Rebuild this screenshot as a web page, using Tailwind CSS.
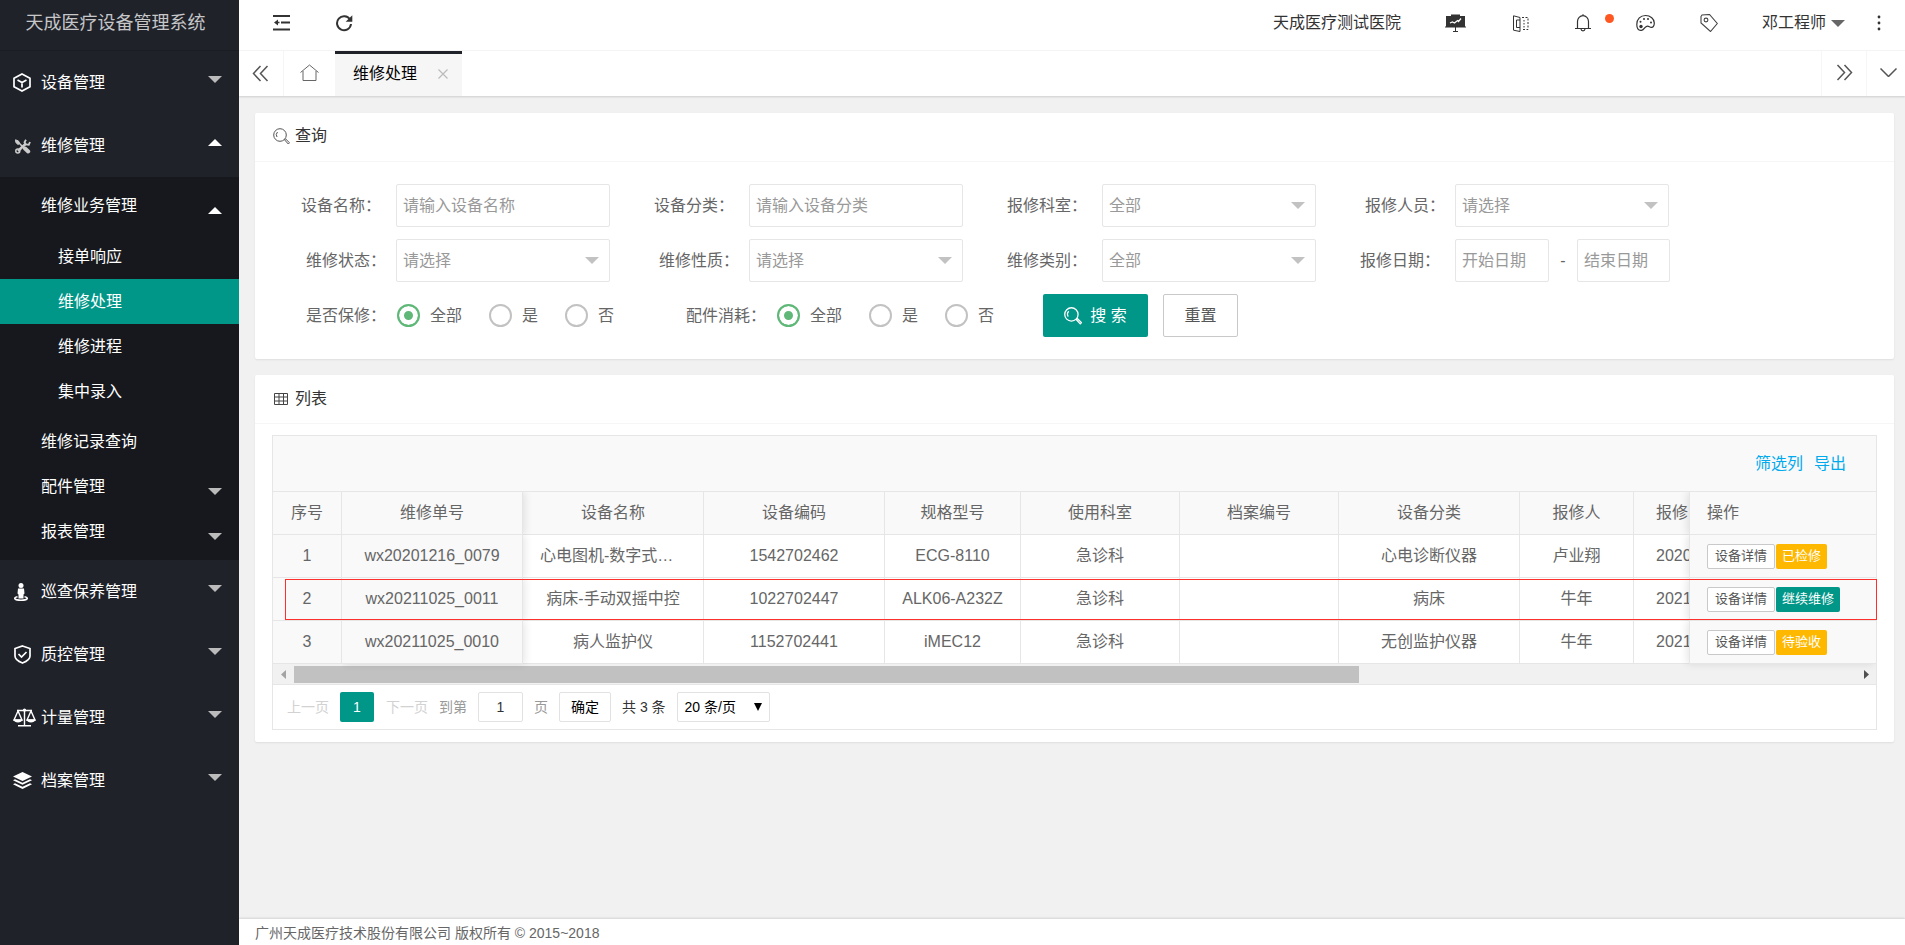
<!DOCTYPE html>
<html lang="zh-CN">
    <head>
        <meta charset="UTF-8">
        <title>天成医疗设备管理系统</title>
        <script src="https://cdn.jsdelivr.net/npm/@tailwindcss/browser@4"></script>
    </head>
    <body class="flex h-screen overflow-hidden bg-[#f1f1f1] font-['Liberation_Sans','Noto_Sans_CJK_SC',sans-serif] text-base text-[#666]">

        <!-- menu lateral -->
        <aside class="w-[239px] shrink-0 bg-[#20222a] text-white">
            <div class="h-[51px] pb-1 pr-2 flex items-center justify-center text-lg text-white/75 border-b border-[#1b1d23]">天成医疗设备管理系统</div>
            <nav id="menu"></nav>
        </aside>

        <div class="flex-1 min-w-0 flex flex-col">

            <!-- topo -->
            <header class="h-[51px] shrink-0 bg-white border-b border-[#f6f6f6] flex items-center justify-between pb-1 pl-[34px] pr-6 text-[#333]">
                <div class="flex items-center gap-11">
                    <button aria-label="收起菜单">
                        <svg class="w-[18px] h-4" viewBox="0 0 18 16" fill="none" stroke="#333" stroke-width="2"><path d="M0 1h17M8 7.500h9M0 14.500h17"/><path d="M1 7.500l4-3v2.200h1.500v1.600H5v2.200z" fill="#333" stroke="none"/></svg>
                    </button>
                    <button aria-label="刷新">
                        <svg class="w-[18px] h-[18px]" viewBox="0 0 18 18" fill="none" stroke="#333" stroke-width="2"><path d="M15 5.500A7 7 0 1 0 16 10"/><path d="M17.300 1.200v6.600h-6.600z" fill="#333" stroke="none"/></svg>
                    </button>
                </div>
                <div class="flex items-center">
                    <a href="#">天成医疗测试医院</a>
                    <button aria-label="大屏" class="ml-11">
                        <svg class="w-[21px] h-[18px]" viewBox="0 0 21 18" fill="none" stroke="#333"><path d="M1 2h5V.500h9V2h5v11H1z" fill="#333" stroke="none"/><path d="M5 9l2.500-1 2 1 3-2.500 1 1 2.500-3" stroke="#fff" stroke-width="1.200"/><path d="M0 13h21M10.500 13v4.500M8 17.500h5"/></svg>
                    </button>
                    <button aria-label="切换" class="ml-[46px]">
                        <svg class="w-[17px] h-[17px]" viewBox="0 0 17 17" fill="none" stroke="#333"><path d="M8 2.500L1.500.800v14.400L8 16.500zM8 5H4.500v7.500H8"/><path d="M10 2.500h6v12h-6" stroke-dasharray="2 1.500"/><path d="M12 5v8" stroke-dasharray="1.500 1.500"/></svg>
                    </button>
                    <button aria-label="消息" class="ml-[45px] relative">
                        <svg class="w-[18px] h-[18px]" viewBox="0 0 18 18" fill="none" stroke="#333" stroke-width="1.200"><path d="M1 14.500h16M3.500 14.500V7.500a5.500 5.800 0 0 1 11 0v7M9 2V.300M7 15c.3 2.600 3.700 2.600 4 0"/></svg>
                        <span class="absolute -right-[22px] top-0 w-[9px] h-[9px] rounded-full bg-[#ff5722]"></span>
                    </button>
                    <button aria-label="主题" class="ml-11">
                        <svg class="w-[19px] h-[18px]" viewBox="0 0 19 18" fill="none" stroke="#333" stroke-width="1.200"><path d="M5.500 16.300C2 16.800.800 14 .800 10.500.800 5 4.500 1.500 9.500 1.500c5 0 8.800 3.500 8.800 7.500 0 2.800-1.300 4.600-3 4.400-2-.3-2.500-1.600-4.500-1.100-2.500.6-2.300 3.600-5.300 4z"/><g fill="#333" stroke="none"><circle cx="5" cy="12.500" r="1.700"/><circle cx="4.500" cy="7.800" r="1"/><circle cx="8" cy="5" r="1"/><circle cx="12" cy="5" r="1"/><circle cx="15" cy="8.500" r="1"/></g></svg>
                    </button>
                    <button aria-label="便签" class="ml-[45px]">
                        <svg class="w-[18px] h-[18px]" viewBox="0 0 18 18" fill="none" stroke="#444" stroke-width="1.100"><path d="M1 2.500L2 1l7.500-.5L17.300 9.500 10.500 17.500 1 9z"/><circle cx="6" cy="6" r="1.900"/></svg>
                    </button>
                    <button class="ml-11 flex items-center gap-[5px]">邓工程师
                        <svg class="w-3.5 h-[7px]" viewBox="0 0 14 7" fill="#666"><path d="M0 0h14L7 7z"/></svg>
                    </button>
                    <button aria-label="更多" class="ml-8">
                        <svg class="w-1 h-4" viewBox="0 0 4 16" fill="#333"><circle cx="2" cy="2" r="1.400"/><circle cx="2" cy="8" r="1.400"/><circle cx="2" cy="14" r="1.400"/></svg>
                    </button>
                </div>
            </header>

            <!-- abas -->
            <div class="h-[45px] shrink-0 bg-white shadow-[0_1px_2px_rgba(0,0,0,0.15)] flex">
                <button aria-label="左移" class="w-[45px] border-r border-[#f6f6f6] flex items-center justify-center pr-0.5">
                    <svg class="w-[17px] h-[17px]" viewBox="0 0 17 17" fill="none" stroke="#555" stroke-width="1.500"><path d="M8.500 1L1.500 8.500l7 7.500M15.500 1l-7 7.500 7 7.500"/></svg>
                </button>
                <button aria-label="首页" class="w-[51px] flex items-center justify-center pb-0.5">
                    <svg class="w-[19px] h-[18px]" viewBox="0 0 19 18" fill="none" stroke="#666"><path d="M.500 8.500l9-7.500 9 7.500M3 7v9.500h13V7"/></svg>
                </button>
                <div class="w-[127px] bg-[#f6f6f6] border-t-3 border-[#20222a] flex items-center justify-between pl-[18px] pr-3.5 pb-[3px] text-black">
                    <a href="#">维修处理</a>
                    <button aria-label="关闭"><svg class="w-2.5 h-2.5" viewBox="0 0 10 10" stroke="#bbb" stroke-width="1.200"><path d="M.500.500l9 9M9.500.500l-9 9"/></svg></button>
                </div>
                <div class="flex-1"></div>
                <button aria-label="右移" class="w-[45px] border-l border-[#f6f6f6] flex items-center justify-center pb-0.5">
                    <svg class="w-[17px] h-[17px]" viewBox="0 0 17 17" fill="none" stroke="#555" stroke-width="1.500"><path d="M1.500 1l7 7.500-7 7.500M8.500 1l7 7.500-7 7.500"/></svg>
                </button>
                <button aria-label="展开" class="w-[39px] border-l border-[#f6f6f6] flex items-center pl-[13px] pb-0.5">
                    <svg class="w-[17px] h-[9px]" viewBox="0 0 17 9" fill="none" stroke="#555" stroke-width="1.500"><path d="M.500.500l8 8 8-8"/></svg>
                </button>
            </div>

            <main class="flex-1 min-h-0 pt-[17px] pl-4 pr-[11px] flex flex-col gap-4">

                <!-- filtro -->
                <section class="bg-white rounded-xs shadow-[0_1px_2px_rgba(0,0,0,0.08)]">
                    <h2 class="h-[49px] border-b border-[#f6f6f6] pl-[18px] pb-0.5 flex items-center gap-[5px] text-[#333]">
                        <svg class="w-[17px] h-[17px]" viewBox="0 0 17 17" fill="none" stroke="#555"><circle cx="7" cy="7" r="6.300"/><path d="M4 9A4 4 0 0 1 4.500 4M11.500 11.800l1-1 4 4-1.200 1.200z"/></svg>
                        查询
                    </h2>
                    <form class="px-[17px] pt-[22px] pb-[22px] flex flex-col gap-3">
                        <div class="flex flex-wrap gap-x-[15px] gap-y-3">
                            <div class="flex items-center">
                                <label for="nome" class="w-[124px] pr-[15px] text-right">设备名称：</label>
                                <input id="nome" type="text" placeholder="请输入设备名称" class="w-[214px] h-[43px] border border-[#e6e6e6] rounded-xs px-1.5 placeholder:text-[#999]">
                            </div>
                            <div class="flex items-center">
                                <label for="classe" class="w-[124px] pr-[15px] text-right">设备分类：</label>
                                <input id="classe" type="text" placeholder="请输入设备分类" class="w-[214px] h-[43px] border border-[#e6e6e6] rounded-xs px-1.5 placeholder:text-[#999]">
                            </div>
                            <div class="flex items-center relative">
                                <label for="setor" class="w-[124px] pr-[15px] text-right">报修科室：</label>
                                <select id="setor" class="appearance-none w-[214px] h-[43px] border border-[#e6e6e6] rounded-xs px-1.5 text-[#999]"><option>全部</option></select>
                                <svg class="absolute right-[11px] w-3.5 h-[7px] pointer-events-none" viewBox="0 0 14 7" fill="#c2c2c2"><path d="M0 0h14L7 7z"/></svg>
                            </div>
                            <div class="flex items-center relative">
                                <label for="pessoa" class="w-[124px] pr-2.5 text-right">报修人员：</label>
                                <select id="pessoa" class="appearance-none w-[214px] h-[43px] border border-[#e6e6e6] rounded-xs px-1.5 text-[#999]"><option>请选择</option></select>
                                <svg class="absolute right-[11px] w-3.5 h-[7px] pointer-events-none" viewBox="0 0 14 7" fill="#c2c2c2"><path d="M0 0h14L7 7z"/></svg>
                            </div>
                        </div>
                        <div class="flex flex-wrap gap-x-[15px] gap-y-3">
                            <div class="flex items-center relative">
                                <label for="estado" class="w-[124px] pr-2.5 text-right">维修状态：</label>
                                <select id="estado" class="appearance-none w-[214px] h-[43px] border border-[#e6e6e6] rounded-xs px-1.5 text-[#999]"><option>请选择</option></select>
                                <svg class="absolute right-[11px] w-3.5 h-[7px] pointer-events-none" viewBox="0 0 14 7" fill="#c2c2c2"><path d="M0 0h14L7 7z"/></svg>
                            </div>
                            <div class="flex items-center relative">
                                <label for="natureza" class="w-[124px] pr-2.5 text-right">维修性质：</label>
                                <select id="natureza" class="appearance-none w-[214px] h-[43px] border border-[#e6e6e6] rounded-xs px-1.5 text-[#999]"><option>请选择</option></select>
                                <svg class="absolute right-[11px] w-3.5 h-[7px] pointer-events-none" viewBox="0 0 14 7" fill="#c2c2c2"><path d="M0 0h14L7 7z"/></svg>
                            </div>
                            <div class="flex items-center relative">
                                <label for="tipo" class="w-[124px] pr-[15px] text-right">维修类别：</label>
                                <select id="tipo" class="appearance-none w-[214px] h-[43px] border border-[#e6e6e6] rounded-xs px-1.5 text-[#999]"><option>全部</option></select>
                                <svg class="absolute right-[11px] w-3.5 h-[7px] pointer-events-none" viewBox="0 0 14 7" fill="#c2c2c2"><path d="M0 0h14L7 7z"/></svg>
                            </div>
                            <div class="flex items-center">
                                <label for="inicio" class="w-[124px] pr-[15px] text-right">报修日期：</label>
                                <input id="inicio" type="text" placeholder="开始日期" class="w-[94px] h-[43px] border border-[#e6e6e6] rounded-xs px-1.5 placeholder:text-[#999]">
                                <span class="w-7 text-center">-</span>
                                <input aria-label="结束日期" type="text" placeholder="结束日期" class="w-[93px] h-[43px] border border-[#e6e6e6] rounded-xs px-1.5 placeholder:text-[#999]">
                            </div>
                        </div>
                        <div class="flex flex-wrap items-center">
                            <fieldset class="flex items-center">
                                <legend class="float-left w-[125px] pr-[11px] text-right">是否保修：</legend>
                                <div class="garantia flex gap-[27px]"></div>
                            </fieldset>
                            <fieldset class="flex items-center ml-[18px]">
                                <legend class="float-left w-[145px] pr-[11px] text-right">配件消耗：</legend>
                                <div class="pecas flex gap-[27px]"></div>
                            </fieldset>
                            <button type="button" class="ml-[49px] w-[105px] h-[43px] rounded-xs bg-[#009688] text-white flex items-center justify-center gap-2">
                                <svg class="w-[18px] h-[18px]" viewBox="0 0 17 17" fill="none" stroke="#fff" stroke-width="1.200"><circle cx="7" cy="7" r="6.300"/><path d="M4 9A4 4 0 0 1 4.500 4M11.500 11.800l1-1 4 4-1.200 1.200z"/></svg>
                                搜 索
                            </button>
                            <button type="reset" class="ml-[15px] w-[75px] h-[43px] rounded-xs border border-[#c9c9c9] text-[#555]">重置</button>
                        </div>
                    </form>
                </section>

                <!-- lista -->
                <section class="bg-white rounded-xs shadow-[0_1px_2px_rgba(0,0,0,0.08)]">
                    <h2 class="h-[49px] border-b border-[#f6f6f6] pl-[19px] flex items-center gap-[7px] text-[#333]">
                        <svg class="w-3.5 h-3" viewBox="0 0 14 12" fill="none" stroke="#444"><path d="M.500.500h13v11H.500zM.500 4h13M.500 8h13M5 .500v11M9.500.500v11"/></svg>
                        列表
                    </h2>
                    <div class="mx-[17px] mt-[11px] border border-[#e6e6e6]">
                        <div class="h-14 bg-[#f9f9f9] border-b border-[#e6e6e6] flex items-center justify-end gap-[11px] pr-[30px] text-[#01aaed]">
                            <a href="#">筛选列</a>
                            <a href="#">导出</a>
                        </div>

                        <div class="relative">
                            <table class="w-full table-fixed border-separate border-spacing-0 text-center">
                                <colgroup>
                                    <col class="w-[69px]"><col class="w-[181px]"><col class="w-[181px]"><col class="w-[181px]"><col class="w-[136px]">
                                    <col class="w-[159px]"><col class="w-[159px]"><col class="w-[181px]"><col class="w-[114px]"><col><col class="w-[187px]">
                                </colgroup>
                                <thead id="cabecalho"></thead>
                                <tbody id="linhas"></tbody>
                            </table>
                            <div class="absolute left-3 -right-px top-[87px] h-[41px] border border-[#ff302c] pointer-events-none z-10"></div>
                        </div>

                        <div class="h-[21px] bg-[#f1f1f1] border-b border-[#e6e6e6] flex items-center px-[7px]">
                            <svg class="w-[6px] h-[9px] shrink-0" viewBox="0 0 6 9" fill="#a3a3a3"><path d="M6 0v9L1 4.500z"/></svg>
                            <div class="flex-1 mx-2"><div class="w-[68.2%] h-[17px] bg-[#c1c1c1]"></div></div>
                            <svg class="w-[6px] h-[9px] shrink-0" viewBox="0 0 6 9" fill="#505050"><path d="M1 0v9l5-4.500z"/></svg>
                        </div>

                        <div class="h-11 flex items-center pl-[14px] pb-px text-sm text-[#999]">
                            <button class="text-[#d2d2d2]" disabled>上一页</button>
                            <button class="ml-[11px] w-[34px] h-[30px] rounded-xs bg-[#009688] text-white">1</button>
                            <button class="ml-3 text-[#d2d2d2]" disabled>下一页</button>
                            <label for="pagina" class="ml-[11px]">到第</label>
                            <input id="pagina" type="text" value="1" class="ml-[11px] w-[45px] h-[30px] border border-[#e2e2e2] rounded-xs text-center text-[#333]">
                            <span class="ml-[11px]">页</span>
                            <button class="ml-[11px] w-[52px] h-[30px] border border-[#e2e2e2] rounded-xs text-black">确定</button>
                            <span class="ml-[11px] text-[#333]">共 3 条</span>
                            <div class="relative ml-[11px] flex items-center">
                                <select aria-label="每页条数" class="appearance-none w-[93px] h-[30px] border border-[#e2e2e2] rounded-xs pl-[7px] text-black"><option>20 条/页</option></select>
                                <svg class="absolute right-2 w-2 h-2 pointer-events-none" viewBox="0 0 8 8" fill="#000"><path d="M0 0h8L4 8z"/></svg>
                            </div>
                        </div>
                    </div>
                    <div class="h-3"></div>
                </section>
            </main>

            <footer class="h-[26px] shrink-0 bg-white shadow-[0_-1px_2px_rgba(0,0,0,0.12)] flex items-center pl-4 pt-0.5 text-sm">广州天成医疗技术股份有限公司 版权所有 © 2015~2018</footer>
        </div>

        <script>

            var icones = {
                cubo: `<svg class="w-[18px] h-[19px]" viewBox="0 0 18 19" fill="none" stroke="#fff" stroke-width="1.700"><path d="M9 1l8 4.300v8.400L9 18l-8-4.300V5.300zM4.500 7L9 9.500 13.500 7M9 9.500v5"/></svg>`,
                chave: `<svg class="w-[18px] h-[15px] mt-0.5" viewBox="0 0 18 15" fill="none" stroke="#ccc"><path d="M5 3l8 8" stroke-width="1.600"/><path d="M2.500.800L5.500 2l1 2.500-1.500 1L2.800 3.500z" fill="#ccc"/><path d="M12 9.500l3.200 3" stroke-width="4" stroke-linecap="round"/><path d="M13 4.500l-8 7.500" stroke-width="2.600"/><path d="M13 .800l-1.500 2.400 1.500 2.300 2.800.2L17 3" stroke-width="1.800"/><circle cx="4.800" cy="12" r="2" stroke-width="1.500"/></svg>`,
                pessoa: `<svg class="w-4 h-[18px]" viewBox="0 0 16 18" fill="#fff"><circle cx="8" cy="2.500" r="2.500"/><path d="M5 5.500h6l.500 5-1 1v4h-5v-4l-1-1z"/><path d="M4.500 13.800c-5 1-3 3.400 3.500 3.400s8.500-2.400 3.500-3.400" fill="none" stroke="#fff" stroke-width="1.500"/></svg>`,
                escudo: `<svg class="w-[19px] h-[19px]" viewBox="0 0 19 19" fill="none" stroke="#fff" stroke-width="1.700"><path d="M9.500 1l7.500 2.500V11c0 3.500-3.500 5.500-7.500 7-4-1.500-7.500-3.500-7.500-7V3.500zM5.500 9l3 3 5-5"/></svg>`,
                balanca: `<svg class="w-[23px] h-[19px]" viewBox="0 0 23 19" fill="none" stroke="#fff" stroke-width="1.400"><path d="M4 2.500h15M11.500 1v16M5 17.800h13M5 3L1 12h8zM18 3l-4 9h8z"/><path d="M.500 11.500h9c-.5 4-8.500 4-9 0zM13.500 11.500h9c-.5 4-8.500 4-9 0z" fill="#fff" stroke="none"/><circle cx="11.500" cy="2" r="1.600" fill="#fff" stroke="none"/></svg>`,
                camadas: `<svg class="w-[19px] h-[17px]" viewBox="0 0 19 17" fill="#fff"><path d="M9.500 0L19 4.500 9.500 9 0 4.500zM2 7.200l7.500 3.600L17 7.200l2 1-9.500 4.500L0 8.200zM2 11.200l7.500 3.600 7.500-3.600 2 1L9.500 17 0 12.200z"/></svg>`
            }

            var baixo = `<svg class="w-3.5 h-[7px]" viewBox="0 0 14 7" fill="#bbb"><path d="M0 0h14L7 7z"/></svg>`
            var cima = `<svg class="w-3.5 h-[7px]" viewBox="0 0 14 7" fill="#fff"><path d="M0 7h14L7 0z"/></svg>`

            var menu = [
                { titulo: "设备管理", icone: "cubo" },
                { titulo: "维修管理", icone: "chave", aberto: true, filhos: [
                    { titulo: "维修业务管理", seta: cima, filhos: ["接单响应", "维修处理", "维修进程", "集中录入"] },
                    { titulo: "维修记录查询", seta: "" },
                    { titulo: "配件管理", seta: baixo },
                    { titulo: "报表管理", seta: baixo }
                ]},
                { titulo: "巡查保养管理", icone: "pessoa" },
                { titulo: "质控管理", icone: "escudo" },
                { titulo: "计量管理", icone: "balanca" },
                { titulo: "档案管理", icone: "camadas" }
            ]

            function montarFilhos(filhos){
                var lista = ""
                filhos.map( item => {
                    lista += `<a href="#" class="h-[45px] pl-[41px] pr-[17px] flex items-center justify-between">${item.titulo}<span class="pt-2.5">${item.seta}</span></a>`
                    if(item.filhos){
                        lista += `<div class="pt-1.5 pb-[5px]">`
                        item.filhos.map( neto => {
                            var cor = neto == "维修处理" ? "bg-[#009688]" : ""
                            lista += `<a href="#" class="h-[45px] pl-[58px] flex items-center ${cor}">${neto}</a>`
                        })
                        lista += `</div>`
                    }
                })
                return `<div class="bg-[#16181d] py-1.5">${lista}</div>`
            }

            function montarMenu(){
                var lista = ""
                menu.map( item => {
                    lista += `
                    <a href="#" class="h-[63px] pl-[13px] pr-[17px] flex items-center">
                        <span class="w-7">${icones[item.icone]}</span>
                        <span class="flex-1">${item.titulo}</span>
                        <span class="pb-1.5">${item.aberto ? cima : baixo}</span>
                    </a>`
                    if(item.filhos){
                        lista += montarFilhos(item.filhos)
                    }
                })
                document.getElementById("menu").innerHTML = lista
            }

            function montarRadios(nome){
                var lista = ""
                var opcoes = ["全部", "是", "否"]
                opcoes.map( (item, i) => {
                    lista += `
                    <label class="flex items-center gap-2.5">
                        <input type="radio" name="${nome}" ${i == 0 ? "checked" : ""} class="appearance-none w-[23px] h-[23px] rounded-full border-2 border-[#c2c2c2] checked:border-[#5fb878] checked:bg-[#5fb878] checked:shadow-[inset_0_0_0_5px_white]">${item}
                    </label>`
                })
                document.querySelector("." + nome).innerHTML = lista
            }

            var colunas = ["序号", "维修单号", "设备名称", "设备编码", "规格型号", "使用科室", "档案编号", "设备分类", "报修人", "报修日期"]

            var registros = [
                ["1", "wx20201216_0079", "心电图机-数字式十二导", "1542702462", "ECG-8110", "急诊科", "", "心电诊断仪器", "卢业翔", "2020-12-16"],
                ["2", "wx20211025_0011", "病床-手动双摇中控", "1022702447", "ALK06-A232Z", "急诊科", "", "病床", "牛年", "2021-10-25"],
                ["3", "wx20211025_0010", "病人监护仪", "1152702441", "iMEC12", "急诊科", "", "无创监护仪器", "牛年", "2021-10-25"]
            ]

            var acoes = [
                { texto: "已检修", cor: "bg-[#ffb800]" },
                { texto: "继续维修", cor: "bg-[#009688]" },
                { texto: "待验收", cor: "bg-[#ffb800]" }
            ]

            // a sombra das colunas fixas só aparece para o lado de dentro (e embaixo na última linha)
            function sombra(lado, ultima){
                if(lado == "esquerda"){
                    return "relative shadow-[2px_0_8px_rgba(0,0,0,0.1)] " + (ultima ? "[clip-path:inset(0_-12px_-8px_0)]" : "[clip-path:inset(0_-12px_0_0)]")
                }
                return "relative shadow-[-2px_0_8px_rgba(0,0,0,0.1)] " + (ultima ? "[clip-path:inset(0_0_-8px_-12px)]" : "[clip-path:inset(0_0_0_-12px)]")
            }

            function classeCelula(i, ultima){
                if(i == 0) return "bg-[#f9f9f9] border-r"
                if(i == 1) return "bg-[#f9f9f9] border-r " + sombra("esquerda", ultima)
                if(i == 2) return "border-r px-[17px] truncate"
                if(i == 9) return "pl-[22px] text-left whitespace-nowrap overflow-hidden"
                return "border-r"
            }

            function montarTabela(){
                var topo = ""
                colunas.map( (item, i) => {
                    topo += `<th class="h-[43px] font-normal border-b border-[#e6e6e6] ${classeCelula(i, false)}">${item}</th>`
                })
                topo += `<th class="h-[43px] font-normal border-b border-l border-[#e6e6e6] bg-[#f9f9f9] pl-[17px] text-left ${sombra("direita", false)}">操作</th>`
                document.getElementById("cabecalho").innerHTML = `<tr class="bg-[#f9f9f9]">${topo}</tr>`

                var corpo = ""
                registros.map( (linha, n) => {
                    var ultima = n == registros.length - 1
                    var celulas = ""
                    linha.map( (item, i) => {
                        celulas += `<td class="h-[43px] border-b border-[#e6e6e6] ${classeCelula(i, ultima)}">${item}</td>`
                    })
                    celulas += `
                    <td class="h-[43px] border-b border-l border-[#e6e6e6] bg-[#f9f9f9] pl-[17px] ${sombra("direita", ultima)}">
                        <div class="flex items-center gap-px text-[13px]">
                            <button class="w-[68px] h-[25px] border border-[#c9c9c9] rounded-xs bg-white text-[#555]">设备详情</button>
                            <button class="h-[25px] px-1.5 rounded-xs text-white ${acoes[n].cor}">${acoes[n].texto}</button>
                        </div>
                    </td>`
                    corpo += `<tr>${celulas}</tr>`
                })
                document.getElementById("linhas").innerHTML = corpo
            }

            montarMenu()
            montarRadios("garantia")
            montarRadios("pecas")
            montarTabela()
        </script>

    </body>
</html>
